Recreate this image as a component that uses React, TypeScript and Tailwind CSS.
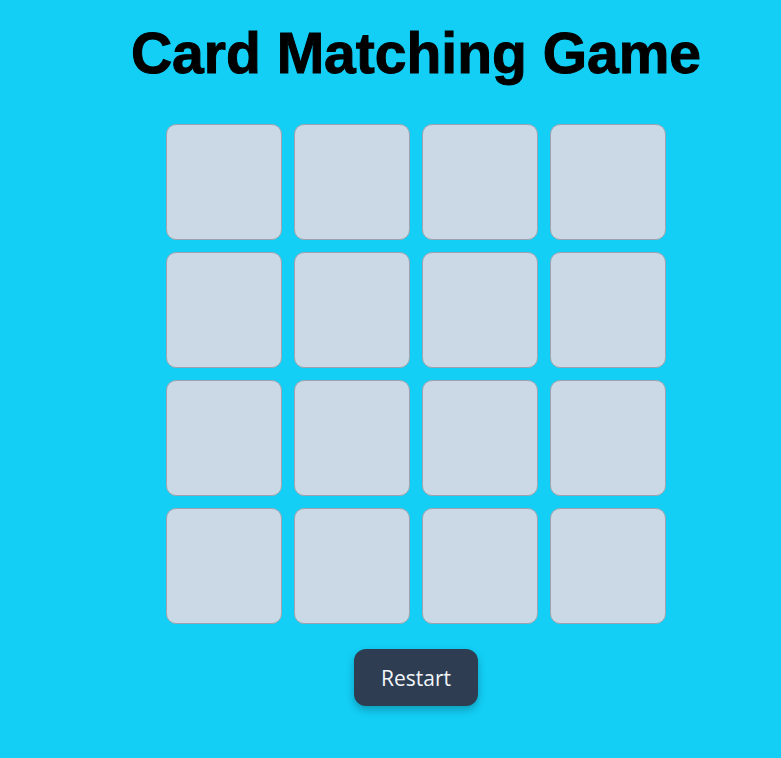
import React from 'react'

const cards = Array.from({ length: 16 }, (_, i) => i)

export default function App() {
  return (
    <div className="min-h-screen w-full bg-[#13cff6] pl-[51px] pt-[21px] flex flex-col items-center">
      {/* Title */}
      <h1
        className="text-[57px] leading-[64px] font-bold text-black [-webkit-text-stroke:1px_black]"
        style={{ fontFamily: '"Liberation Sans", Arial, sans-serif' }}
      >
        Card Matching Game
      </h1>

      {/* Board */}
      <div className="mt-[39px] grid grid-cols-4 gap-[12px]">
        {cards.map((c) => (
          <button
            key={c}
            type="button"
            className="w-[116px] h-[116px] rounded-[10px] border border-[#9ca3af] bg-[#cad9e5]"
          />
        ))}
      </div>

      {/* Restart */}
      <button
        type="button"
        className="mt-[25px] w-[124px] h-[57px] pt-[3px] rounded-[12px] bg-[#2e3d51] text-[#f1f5f9] text-[21px] shadow-[0_4px_8px_rgba(0,0,0,0.25)]"
        style={{ fontFamily: '"Open Sans", "Noto Sans", sans-serif' }}
      >
        Restart
      </button>
    </div>
  )
}
